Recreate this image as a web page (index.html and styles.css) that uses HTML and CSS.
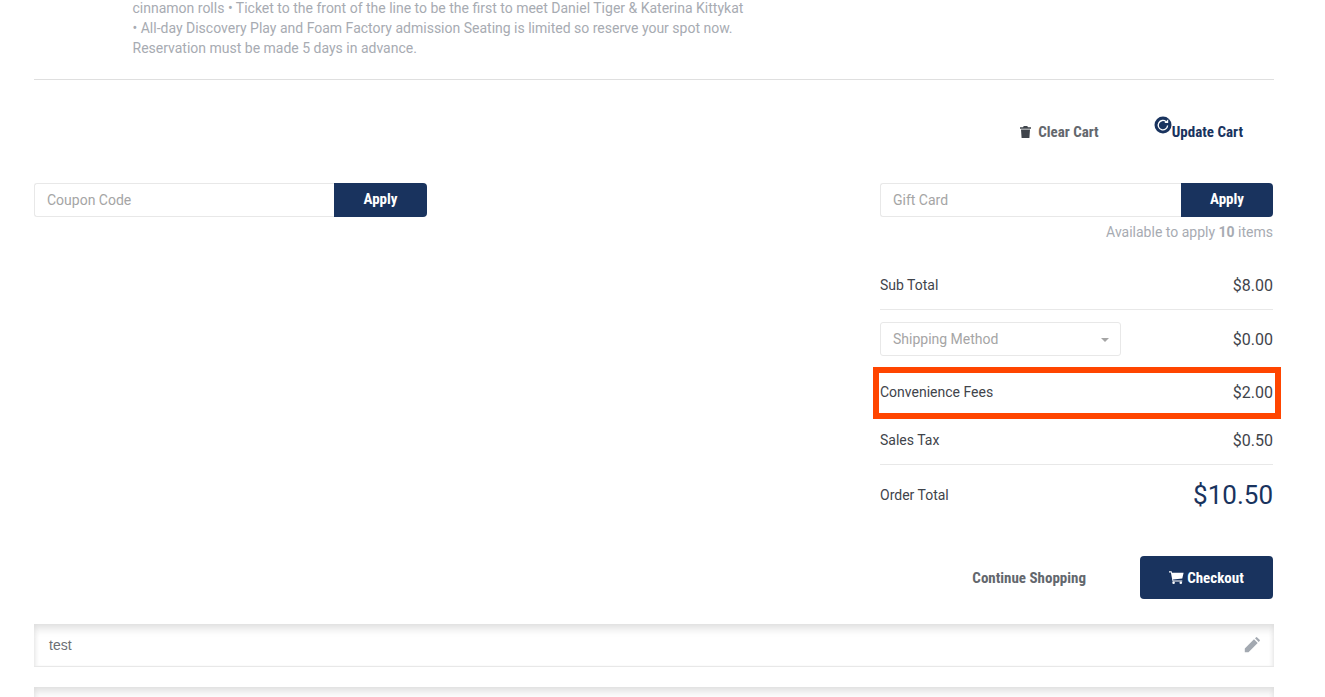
FILE: index.html
```html
<!DOCTYPE html>
<html lang="en">
<head>
<meta charset="utf-8">
<title>Cart</title>
<link rel="stylesheet" href="styles.css">
</head>
<body>
<main class="page">
  <p class="desc">cinnamon rolls • Ticket to the front of the line to be the first to meet Daniel Tiger &amp; Katerina Kittykat<br>• All-day Discovery Play and Foam Factory admission Seating is limited so reserve your spot now.<br>Reservation must be made 5 days in advance.</p>
  <hr class="rule">
  <div class="cart-actions">
    <a class="action clear">
      <svg class="ic-trash" viewBox="0 0 11 12" width="11" height="12"><path d="M3.700 0h3.600l.6 1.300H11v1.400H0V1.300h3.100zM1 3.500h9l-.6 8.500H1.600z" fill="#3f444b"/></svg>
      <span class="cond">Clear Cart</span>
    </a>
    <a class="action update">
      <svg class="ic-refresh" viewBox="0 0 18 18" width="18" height="18"><circle cx="9" cy="9" r="8.500" fill="#19335e"/><path d="M13.600 9.500a4.700 4.700 0 1 1-1.500-3.800" fill="none" stroke="#fff" stroke-width="1.300"/><path d="M14.200 3.200v3.800h-3.800z" fill="#fff"/></svg>
      <span class="cond">Update Cart</span>
    </a>
  </div>
  <div class="coupons">
    <div class="group group-left">
      <div class="field">Coupon Code</div>
      <button class="apply apply-left"><span class="cond">Apply</span></button>
    </div>
    <div class="gift">
      <div class="group">
        <div class="field">Gift Card</div>
        <button class="apply apply-right"><span class="cond">Apply</span></button>
      </div>
      <div class="avail">Available to apply <b>10</b> items</div>
    </div>
  </div>
  <section class="summary">
    <div class="row row-sub"><span>Sub Total</span><span class="amt">$8.00</span></div>
    <div class="row row-ship">
      <div class="select">Shipping Method<i class="caret"></i></div>
      <span class="amt">$0.00</span>
    </div>
    <div class="row row-fee"><span>Convenience Fees</span><span class="amt">$2.00</span><div class="highlight"></div></div>
    <div class="row row-tax"><span>Sales Tax</span><span class="amt">$0.50</span></div>
    <div class="row row-total"><span>Order Total</span><span class="grand">$10.50</span></div>
  </section>
  <div class="footer-actions">
    <a class="continue"><span class="cond">Continue Shopping</span></a>
    <button class="checkout">
      <svg viewBox="0 0 15 13" width="15" height="13"><path d="M0 .3h2.600l.4 1.400h11.600l-1.300 5.900-9.300.9.3 1h9v1.100H3.600L1.900 1.400H0z" fill="#fff"/><circle cx="4.600" cy="11.700" r="1.300" fill="#fff"/><circle cx="11.800" cy="11.700" r="1.300" fill="#fff"/></svg>
      <span class="cond">Checkout</span>
    </button>
  </div>
  <div class="note">
    <span>test</span>
    <svg viewBox="0 0 16 16" width="16" height="16"><path d="M.8 15.200v-3.700L10 2.300l3.700 3.700-9.200 9.200zM11 1.300l.9-.9a.9.900 0 0 1 1.300 0l2.400 2.400a.9.900 0 0 1 0 1.300l-.9.900z" fill="#a3a9b1"/></svg>
  </div>
  <div class="note note-next"></div>
</main>
</body>
</html>
```

FILE: styles.css
```css
* { box-sizing: border-box; }
html, body { margin: 0; height: 697px; overflow: hidden; background: #fff; }
body { font-family: Roboto, "Liberation Sans", sans-serif; font-size: 14px; color: #3f444b; }
.page { width: 1240px; margin-left: 34px; }
.cond { display: inline-block; font-size: 15px; font-weight: 700; font-stretch: 75%; font-variation-settings: "wdth" 75; }
.desc { margin: -2px 0 0; padding-left: 98.5px; width: 760px; line-height: 20px; color: #a7abb2; font-size: 14px; }
.rule { margin: 21px 0 0; border: 0; border-top: 1px solid #dfdfdf; }
.cart-actions { display: flex; justify-content: flex-end; height: 103px; padding: 37px 31px 0 0; }
.action { display: flex; height: 32px; }
.clear { color: #63676d; align-items: center; margin-right: 55px; height: 30px; }
.ic-trash { margin-right: 7px; }
.update { color: #19335e; align-items: flex-start; margin-top: -1px; }
.update .cond { margin-top: 7px; }
.coupons { display: flex; justify-content: space-between; padding-right: 1px; }
.group { display: flex; height: 34px; }
.group-left { width: 393px; }
.gift { width: 393px; }
.field { flex: 1; border: 1px solid #e8e8e8; border-right: 0; border-radius: 3px 0 0 3px; padding: 0 12px; line-height: 32px; color: #a5a5a5; font-size: 14px; }
.apply { border: 0; padding: 0 0 2px; background: #19335e; color: #fff; font-family: inherit; border-radius: 0 4px 4px 0; }
.apply-left { width: 93px; }
.apply-right { width: 92px; }
.avail { margin-top: 7px; text-align: right; color: #a7abb2; font-size: 14px; line-height: 16px; }
.summary { margin: 0 0 0 846px; width: 393px; padding-top: 21px; }
.row { position: relative; display: flex; justify-content: space-between; align-items: center; font-size: 14px; color: #3f444b; }
.amt { font-size: 16px; }
.row-sub { height: 49px; border-bottom: 1px solid #e8e8e8; }
.row-ship { height: 58px; }
.row-fee { height: 48px; }
.row-tax { height: 49px; border-bottom: 1px solid #e8e8e8; }
.row-total { height: 60px; }
.select { position: relative; width: 241px; height: 34px; border: 1px solid #e8e8e8; border-radius: 3px; padding: 0 12px; line-height: 32px; color: #a5a5a5; }
.caret { position: absolute; right: 11px; top: 15px; border: 4px solid transparent; border-top-color: #a5a5a5; border-bottom: 0; }
.highlight { position: absolute; left: -7px; right: -8px; top: -1px; bottom: -3px; border: 6px solid #ff4500; pointer-events: none; }
.grand { font-size: 26px; color: #19335e; }
.footer-actions { display: flex; justify-content: flex-end; align-items: center; margin-top: 31px; padding-right: 1px; }
.continue { color: #63676d; margin-right: 54px; }
.checkout { display: flex; align-items: center; justify-content: center; gap: 3px; width: 133px; height: 43px; border: 0; border-radius: 4px; background: #19335e; color: #fff; font-family: inherit; }
.note { display: flex; justify-content: space-between; align-items: center; height: 43px; margin-top: 25px; padding: 0 14px 0 15px; border-bottom: 1px solid #e8e8e8; background: #fff; box-shadow: inset 0 9px 10px -5px #dcdcdc, inset 4px 0 5px -3px #e6e6e6, inset -4px 0 5px -3px #e6e6e6; font-family: "Liberation Sans", Arial, sans-serif; font-size: 14px; color: #6b6f75; }
.note-next { margin-top: 20px; height: 30px; border: 0; }
```
